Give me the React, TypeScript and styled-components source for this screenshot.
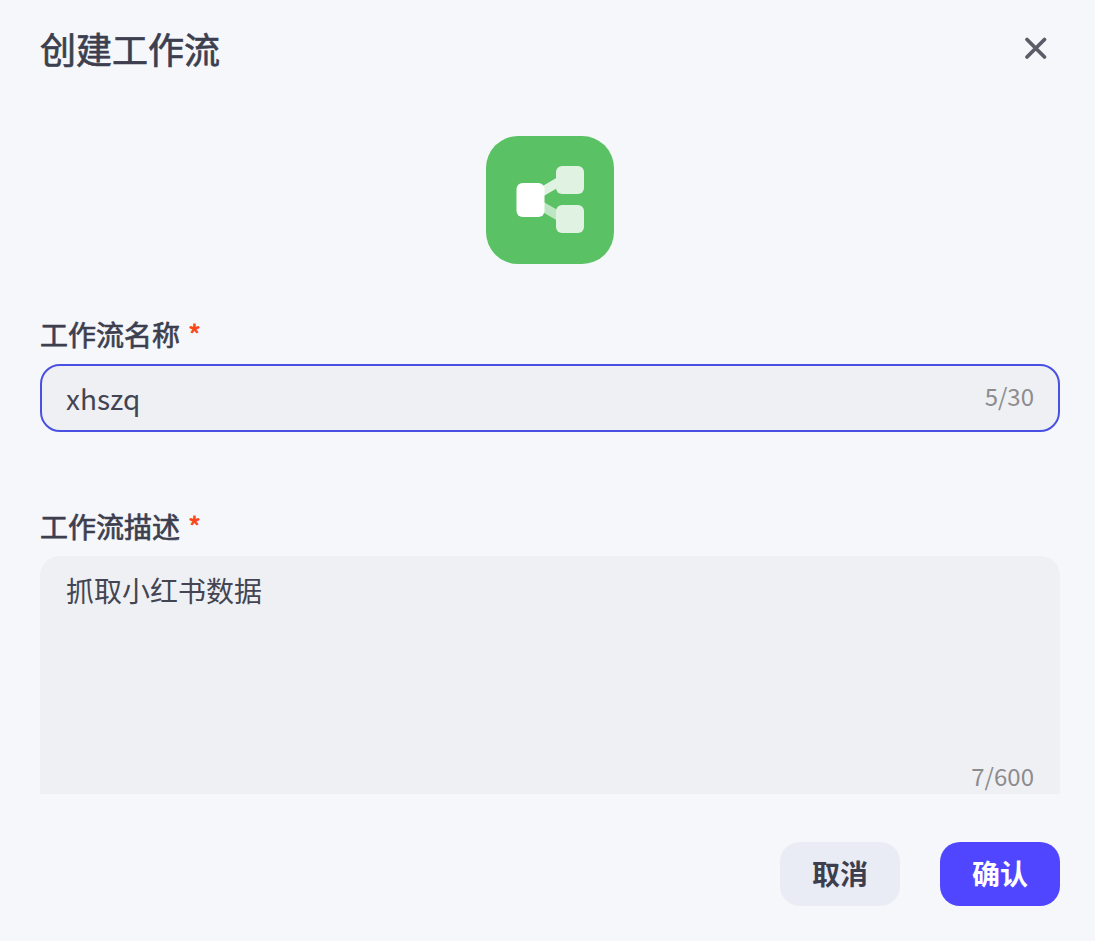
import React from 'react';
import styled, { createGlobalStyle } from 'styled-components';

const FONT = '"Noto Sans CJK SC", "Noto Sans", sans-serif';

const GlobalStyle = createGlobalStyle`
    html, body { margin: 0; padding: 0; background: #f5f7fb; }
    * { box-sizing: border-box; }
`;

// the reference text is grey-antialiased, a non opaque layer gives the same
const Modal = styled.div`
    width: 1095px;
    height: 941px;
    padding: 0 35px 35px 40px;
    background: #f5f7fb;
    font-family: ${FONT};
    color: #3d3f4f;
    display: flex;
    flex-direction: column;
    overflow: hidden;
    opacity: 0.999;
`;

const Header = styled.header`
    height: 100px;
    display: flex;
    align-items: center;
    justify-content: space-between;
`;

const Title = styled.h1`
    margin: -4px 0 0;
    font-size: 36px;
    line-height: 50px;
    font-weight: 400;
    -webkit-text-stroke: 0.7px #3d3f4f;
    color: #3d3f4f;
`;

const CloseButton = styled.button`
    width: 40px;
    height: 40px;
    margin: -3px 4px 0 0;
    padding: 0;
    border: 0;
    background: none;
    display: flex;
    align-items: center;
    justify-content: center;
`;

const IconRow = styled.div`
    display: flex;
    justify-content: center;
    padding: 36px 0 54px;
`;

const IconTile = styled.div`
    width: 128px;
    height: 128px;
    border-radius: 32px;
    background: #5ac264;
    display: flex;
    align-items: center;
    justify-content: center;
`;

const Field = styled.div<{ $gap: number }>`
    margin-bottom: ${p => p.$gap}px;
`;

const Label = styled.label`
    display: block;
    height: 46px;
    padding-bottom: 4px;
    font-size: 28px;
    line-height: 32px;
    font-weight: 400;
    -webkit-text-stroke: 0.7px #3d3f4f;
    color: #3d3f4f;
`;

const Star = styled.span`
    margin-left: 8px;
    color: #fa4619;
    -webkit-text-stroke: 0.7px #fa4619;
`;

const InputBox = styled.div`
    position: relative;
    height: 68px;
    border: 2px solid #4a50e2;
    border-radius: 20px;
    background: #eff0f4;
`;

const TextInput = styled.input`
    width: 100%;
    height: 100%;
    padding: 0 110px 0 24px;
    border: 0;
    outline: 0;
    background: transparent;
    font-family: ${FONT};
    font-size: 28px;
    color: #434552;
`;

const Counter = styled.span<{ $bottom: number; $right: number }>`
    position: absolute;
    right: ${p => p.$right}px;
    bottom: ${p => p.$bottom}px;
    font-size: 24px;
    line-height: 34px;
    color: #8c8c8f;
`;

const AreaBox = styled.div`
    position: relative;
    height: 238px;
    border-radius: 20px 20px 0 0;
    background: #eff0f4;
`;

const TextArea = styled.textarea`
    display: block;
    width: 100%;
    height: 100%;
    padding: 14px 26px;
    border: 0;
    outline: 0;
    resize: none;
    background: transparent;
    font-family: ${FONT};
    font-size: 28px;
    line-height: 40px;
    color: #434552;
`;

const Footer = styled.footer`
    display: flex;
    justify-content: flex-end;
    gap: 40px;
    margin-top: 48px;
`;

const Button = styled.button<{ $primary?: boolean }>`
    width: 120px;
    height: 64px;
    padding: 0 0 2px;
    border: 0;
    border-radius: 20px;
    font-family: ${FONT};
    font-size: 28px;
    font-weight: 700;
    background: ${p => (p.$primary ? '#5046ff' : '#e9ecf4')};
    color: ${p => (p.$primary ? '#ffffff' : '#3d3f4f')};
`;

const App = () => {
    return (
        <Modal>
            <GlobalStyle />
            <Header>
                <Title>创建工作流</Title>
                <CloseButton>
                    <svg width="40" height="40" viewBox="0 0 40 40" fill="none">
                        <path d="M11 10.500L28.500 28M28.500 10.500L11 28" stroke="#5b5c68" strokeWidth="3.800" strokeLinecap="round" />
                    </svg>
                </CloseButton>
            </Header>
            <IconRow>
                <IconTile>
                    <svg width="128" height="128" viewBox="0 0 128 128" fill="none">
                        <path d="M52 58L76 44" stroke="#e0f2e1" strokeWidth="9" />
                        <path d="M52 68L76 82" stroke="#bfe6c3" strokeWidth="9" />
                        <rect x="70" y="30" width="28" height="28" rx="6" fill="#e0f2e1" />
                        <rect x="70" y="69" width="28" height="28" rx="6" fill="#e0f2e1" />
                        <rect x="30.500" y="47" width="28" height="34" rx="6" fill="#ffffff" />
                    </svg>
                </IconTile>
            </IconRow>
            <Field $gap={78}>
                <Label>工作流名称<Star>*</Star></Label>
                <InputBox>
                    <TextInput value="xhszq" readOnly />
                    <Counter $bottom={17} $right={24}>5/30</Counter>
                </InputBox>
            </Field>
            <Field $gap={0}>
                <Label>工作流描述<Star>*</Star></Label>
                <AreaBox>
                    <TextArea value="抓取小红书数据" readOnly />
                    <Counter $bottom={1} $right={26}>7/600</Counter>
                </AreaBox>
            </Field>
            <Footer>
                <Button>取消</Button>
                <Button $primary>确认</Button>
            </Footer>
        </Modal>
    );
};

export default App;
